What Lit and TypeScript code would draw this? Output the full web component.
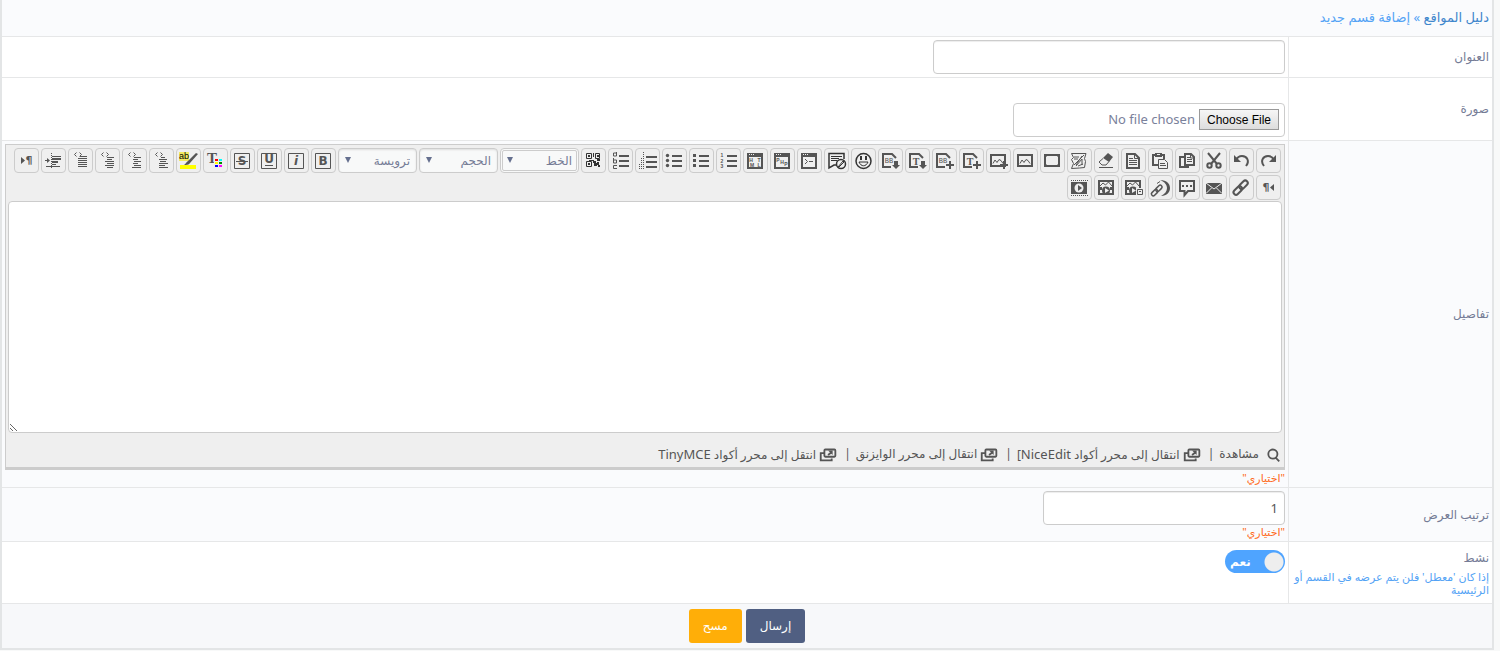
import { LitElement, html, css, svg } from "lit";
import { customElement } from "lit/decorators.js";

const frame = svg`<path class="s" d="M4.500 5.500h15v15h-15z"/>`;
const letter = (t: string) => svg`${frame}<text class="b" x="12" y="17">${t}</text>`;
const picture = svg`<path class="s2" d="M5 7h14v11H5z"/><path class="s" d="M7 15.500l2-3.500 2 2.500 2-3 2 1 2 3"/>`;
const page = svg`<path class="s2" d="M13 19H5V6h7"/><path class="s2" d="M11 6h3l4 4"/>`;
const plus = svg`<path class="s2" d="M14 17h8M18 13v8"/>`;
const down = svg`<path class="f" d="M16 13h4v4h2l-4 4-4-4h2z"/>`;
const win = svg`<path class="s2" d="M5 6h14v14H5z"/><path class="f" d="M4 5h16v4H4z"/><path class="w" d="M6 6h1v1H6zM8 6h1v1H8zM10 6h1v1h-1z"/>`;
const chain = svg`<g transform="rotate(-45 12 13)"><rect class="s2" x="3" y="10" width="10" height="5" rx="2.500"/><rect class="s2" x="11" y="10" width="10" height="5" rx="2.500"/></g>`;
const rows = svg`<path class="s2" d="M11 8h10M11 13h10M11 18h10"/>`;
const code = svg`<path class="s" d="M8.500 4.500l-2 2 2 2M11.500 4.500l2 2-2 2"/>`;
const play = (x: number, y: number, r: number) =>
  svg`<circle class="w" cx=${x} cy=${y} r=${r + 1}/><circle class="f" cx=${x} cy=${y} r=${r}/><path class="w" d="M${x - 1} ${y - 2}v4l3-2z"/>`;

const icons: Record<string, unknown> = {
  redo: svg`<path class="s2" d="M8 18C4 13 7 8 12 8c3 0 5 2 6 4"/><path class="f" d="M20 7v7h-7z"/>`,
  undo: svg`<path class="s2" d="M17 18c4-5 1-10-4-10-3 0-5 2-6 4"/><path class="f" d="M5 7v7h7z"/>`,
  cut: svg`<path class="s2" d="M6 5l9 11M18 5L9 16"/><circle class="s2" cx="7.500" cy="17.500" r="2.200"/><circle class="s2" cx="16.500" cy="17.500" r="2.200"/>`,
  copy: svg`<path class="s2" d="M14 19H5V9h4"/><path class="s2" d="M10 6h6l3 3v8h-9z"/><path class="s" d="M12 9.500h3M12 11.500h5M12 13.500h5M15.500 6v4h4"/>`,
  paste: svg`<path class="s2" d="M10 17H5V7h11v4"/><path class="f" d="M7 5h7v4H7z"/><path class="w" d="M9 6h3v1H9z"/><path class="s" d="M10.500 11.500h6l3 3v6h-9zM12 15.500h5M12 17.500h6"/>`,
  doc: svg`<path class="s2" d="M6 6h8l4 4v10H6z"/><path class="s" d="M13.500 6v4.500H18M8 10.500h4M8 12.500h8M8 14.500h8M8 16.500h8"/>`,
  eraser: svg`<path class="f" d="M14 5l5 4-4 5-6-4z"/><path class="s" d="M9 10.500l-4 3.500 3 3h4l3-3.500M5 19.500h14"/>`,
  map: svg`<path class="s" d="M4.500 5.500H19l-1.500 5 1 3-1 6-5 .5-8 .5 2-5-2-4 2-2zM7 9h5M7 11h4M7 17l6-6 4-4M9 18l6-7v6M15 8l-6 9M11 18l5-2"/>`,
  full: svg`<path class="s2" d="M5 7h14v11H5z"/><path class="f" d="M4 6h5L4 11zM20 6h-5l5 5zM4 19h5l-5-5zM20 19h-5l5-5z"/>`,
  image: picture,
  imageAdd: svg`${picture}${plus}`,
  textAdd: svg`${page}<text class="t" x="11" y="17">T</text>${plus}`,
  bbAdd: svg`${page}<text class="n" x="11" y="15">BB</text>${plus}`,
  textDown: svg`${page}<text class="t" x="11" y="17">T</text>${down}`,
  bbDown: svg`${page}<text class="n" x="11" y="15">BB</text>${down}`,
  smile: svg`<circle class="k2" cx="12.500" cy="13" r="7.500"/><path class="k" d="M8 14c2 5 7 5 9 0z"/><path class="kf" d="M9 8h2v4H9zM14 8h2v4h-2z"/>`,
  note: svg`<path class="k2" d="M20 11V5.500H5V20l5-3h3"/><path class="k" d="M7 8.500h11M7 10.500h8M7 12.500h6"/><circle class="k2" cx="17" cy="16" r="4.500"/><path class="k" d="M14 19l5-6 1 1-5 5"/>`,
  shell: svg`${win}<path class="s" d="M8 11l2.500 2.500L8 16M12 13.500h4"/>`,
  php: svg`${win}<text class="m" x="8" y="14">P</text><text class="m" x="12" y="16">H</text><text class="m" x="16" y="18">P</text>`,
  htm: svg`${win}<text class="m" x="8" y="14">H</text><text class="m" x="16" y="14">T</text><text class="m" x="9" y="19">M</text><text class="m" x="16" y="19">L</text>`,
  ol: svg`${rows}<text class="m" x="6" y="9">1</text><text class="m" x="6" y="15">2</text><text class="m" x="6" y="20">3</text>`,
  square: svg`<path class="s2" d="M10 8h10M10 13h10M10 18h10"/><path class="f" d="M4 6h3v3H4zM4 11h3v3H4zM4 16h3v3H4z"/>`,
  bullet: svg`<path class="s2" d="M10 8h10M10 13h10M10 18h10"/><circle class="f" cx="5.500" cy="7.500" r="1.700"/><circle class="f" cx="5.500" cy="12.500" r="1.700"/><circle class="f" cx="5.500" cy="17.500" r="1.700"/>`,
  roman: svg`<path class="s2" d="M11 9h11M11 14h11M11 19h11"/><path class="d" d="M8.500 4v5M8.500 10v5M6.500 10v5M8.500 16v5M6.500 16v5M4.500 16v5"/>`,
  alpha: svg`${rows}<path class="s" d="M8.500 4v4h-3v-3h3M5.500 10v5h3v-3h-3M9 17.500H5.500v3H9"/>`,
  qr: svg`<path class="k" d="M5.500 5.500h5v5h-5zM14.500 5.500h4v5h-4zM5.500 13.500h5v5h-5z"/><path class="kf" d="M7 7h2v2H7zM16 7h2v2h-2zM7 15h2v2H7zM12 5h1v4h-1zM8 12h5v1H8zM12 13h3v2h-3zM16 11h3v2h-3zM13 15h3v3h-3zM16 14h2v3h-2zM17 17h2v2h-2z"/>`,
  bold: letter("B"),
  italic: svg`${frame}<text class="b i" x="12" y="17">i</text>`,
  under: svg`${frame}<text class="b" x="12" y="15">U</text><path class="s" d="M8 17.500h8"/>`,
  strike: svg`${letter("S")}<path class="s" d="M6 13.500h12"/>`,
  color: svg`<text class="T" x="9" y="15">T</text><path class="w" d="M11 10h10v10H11z"/><path fill="#f00" d="M12 11h3v2h-3z"/><path fill="#0ff" d="M16 11h3v2h-3z"/><path fill="#ff0" d="M12 14h3v2h-3z"/><path fill="#080" d="M16 14h3v2h-3z"/><path fill="#00f" d="M12 17h3v2h-3z"/><path fill="#f0f" d="M16 17h3v2h-3z"/>`,
  mark: svg`<path fill="#f1ea62" d="M3 4h10v9H3z"/><path fill="#ff0" d="M4 17h16v4H4z"/><text class="ab" x="8" y="11">ab</text><path class="f" d="M20 5l2 1-8 9-2-2zM12 13l2 2c-1 2-4 2-6 2 2-1 2-3 4-4z"/>`,
  l1: svg`${code}<path class="s" d="M12 8.500h7M10 10.500h9M10 12.500h9M10 14.500h9M10 16.500h9M10 18.500h9"/>`,
  l2: svg`${code}<path class="s" d="M12 9.500h7M12 11.500h5M10 13.500h9M12 15.500h7M10 17.500h9M12 19.500h6"/>`,
  l3: svg`${code}<path class="s" d="M12 9.500h7M11 11.500h5M12 13.500h7M11 15.500h5M12 17.500h7M10 19.500h9"/>`,
  l4: svg`${code}<path class="s" d="M12 9.500h4M10 11.500h8M11 13.500h6M10 15.500h9M10 17.500h6M10 19.500h9"/>`,
  indent: svg`<path class="s" d="M11 8.500h9M11 16.500h4M5 18.500h14M4 12.500h4"/><path class="s2" d="M11 11h9M11 14h6"/><path class="f" d="M6 10l3 2.500L6 15z"/><path class="d" d="M10.500 5v16"/>`,
  ltr: svg`<path class="f" d="M7 9v7l4-3.500z"/><text class="p" x="15" y="16">¶</text>`,
  rtl: svg`<path class="f" d="M18 9v7l-4-3.500z"/><text class="p" x="10" y="16">¶</text>`,
  link: chain,
  mail: svg`<path class="f" d="M4 8h16v11H4z"/><path class="l" d="M4 8l8 6 8-6M4 18.500l5.500-5.500M20 18.500L14.500 13"/>`,
  chat: svg`<path class="s2" d="M5 6h14v10h-6l-3.500 4v-4H5z"/><path class="f" d="M7 10h2v2H7zM11 10h2v2h-2zM15 10h2v2h-2z"/>`,
  moon: svg`<g transform="translate(0 6) scale(.75)">${chain}</g><path class="f" d="M12 5c7 0 10 4 10 8s-3 8-9 8c4-2 6-5 6-8s-2-6-7-8z"/><path class="s" d="M9 8.500l3-2"/>`,
  mediaImage: svg`<path class="s2" d="M5 6h14v13H5z"/><path class="s" d="M6 11l3-3 2.500 2 3-3 3.500 4"/><path class="f" d="M5 12h3v3H5zM16 12h3v3h-3z"/><circle class="f" cx="12" cy="15.500" r="4"/><path class="w" d="M11 13v5l4-2.500z"/>`,
  mediaAdd: svg`<path class="s2" d="M15 19H5V6h14v7"/><path class="s" d="M6 11l3-3 2.500 2 3-3 3.500 4"/><path class="f" d="M5 12h3v3H5z"/><circle class="f" cx="12" cy="15.500" r="4"/><path class="w" d="M11 13v5l4-2.500z"/><path class="w" d="M15 13h7v8h-7z"/><path class="s" d="M16.500 14.500h5v5h-5zM18 16.500h2"/>`,
  video: svg`<path class="d" d="M4 5.500h17M4 20.500h17"/><path class="f" d="M4 7h16v12H4z"/><circle class="w" cx="12" cy="13" r="4.500"/><path class="f" d="M11 10v6l4-3z"/>`,
  search: svg`<circle class="s2" cx="14" cy="12" r="5"/><path class="s2" d="M17 16l4 4"/>`,
  open: svg`<path class="s2" d="M8 11H4v8h12v-2"/><rect class="s2" x="8" y="7" width="12" height="8" rx="1"/><path class="s2" d="M12 13l4-3"/><path class="f" d="M12 8h5v5z"/>`,
};

const draw = (name: string) =>
  html`<svg class="ic" viewBox="1 1 23 23" aria-hidden="true">${icons[name]}</svg>`;

const before = "redo undo cut copy paste doc eraser map full image imageAdd textAdd bbAdd textDown bbDown smile note shell php htm ol square bullet roman alpha qr".split(" ");
const after = "bold italic under strike color mark l4 l3 l2 l1 indent ltr rtl link mail chat moon mediaAdd mediaImage video".split(" ");

@customElement("app-root")
export class AppRoot extends LitElement {
  static styles = css`
    :host {
      display: block;
      box-sizing: border-box;
      min-height: 100vh;
      direction: rtl;
      padding-right: 6px;
      background: #f8f9f9;
      font: 12px/18px "Noto Sans", "DejaVu Sans", sans-serif;
      color: #757c96;
    }
    * { box-sizing: border-box; }
    form { border: solid #e3e5e6; border-width: 0 2px 2px; background: #fff; }
    .head { height: 37px; padding: 8px 3px; background: #fafbfd; border-bottom: 1px solid #e6e7e8; color: #54a3f5; font-size: 13px; }
    a { color: inherit; text-decoration: none; }
    .head a { color: #3f86cc; }
    .head .here { color: #54a3f5; }
    .row { display: grid; grid-template-columns: 204px minmax(0, 1fr); border-bottom: 1px solid #e6e7e8; }
    .alt { background: #fafbfd; }
    .name { display: flex; flex-direction: column; justify-content: center; padding: 3px; border-left: 1px solid #e6e7e8; }
    .cell { padding: 3px; }
    .file { padding-top: 25px; }
    .tall { min-height: 62px; }
    .name small { margin-top: 3px; font-size: 11px; line-height: 13px; color: #54a3f5; }
    .box { display: block; height: 34px; border: 1px solid #ccc; border-radius: 4px; background: #fff; box-shadow: inset 0 1px 1px rgba(0, 0, 0, .075); font: inherit; font-size: 13px; color: #555; padding: 6px; }
    .title { width: 352px; }
    .order { width: 242px; }
    .upload { width: 272px; padding: 5px; color: #7a819b; box-shadow: none; }
    .upload::file-selector-button { height: 21px; margin: 0 0 0 4px; padding: 0 7px; border: 1px solid #999; border-radius: 0; background: linear-gradient(#f6f6f6, #ddd); font: 12px "Liberation Sans", sans-serif; color: #000; }
    .opt { font-size: 11px; line-height: 12px; color: #ff6a1a; margin-top: 1px; }
    .editor { border: 1px solid #ccc; border-bottom-width: 3px; background: #efefef; padding: 3px 2px 0; margin-bottom: 2px; }
    .bar { display: flex; flex-wrap: wrap; gap: 2px; padding-right: 1px; }
    .tool { width: 25px; height: 25px; padding: 0; border: 1px solid #ccc; border-radius: 4px; background: #efefef; }
    .ic { display: block; width: 23px; height: 23px; }
    .pick { position: relative; width: 79px; height: 25px; }
    .pick select { appearance: none; width: 79px; height: 25px; padding: 0 6px; border: 1px solid #ccc; border-radius: 4px; background: #f8f9f9; font: inherit; color: #757c96; box-shadow: inset 0 1px 2px #ddd; }
    .pick::after { content: ""; position: absolute; left: 7px; top: 9px; border: solid transparent; border-width: 6px 3px 0; border-top-color: #65708f; pointer-events: none; }
    .pick.on select { border: 3px double #ccc; padding: 0 4px; box-shadow: none; }
    textarea { display: block; width: 100%; height: 232px; margin-top: 1px; border: 1px solid #ccc; border-radius: 4px; background: #fff; font: inherit; resize: both; }
    .links { display: flex; align-items: center; gap: 5px; height: 34px; padding-top: 8px; color: #555; }
    .links a { display: flex; align-items: center; gap: 2px; }
    .links .ic { width: 21px; height: 21px; }
    .links bdi { font-size: 13px; }
    .switch { position: relative; display: block; width: 60px; height: 23px; margin-top: 5px; color: #fff; font-weight: bold; }
    .switch input { appearance: none; display: block; width: 60px; height: 23px; margin: 0; border-radius: 12px; background: radial-gradient(circle at 49px 12px, #eee 9px, #4fa4ff 10px); }
    .switch span { position: absolute; left: 5px; top: 3px; }
    .foot { display: flex; justify-content: center; gap: 4px; padding: 5px 0; background: #f7f8fa; }
    .go { height: 34px; border: 0; border-radius: 3px; padding: 0 14px; font: inherit; color: #fff; background: #505f82; }
    .clear { background: #ffae08; }
    .s, .s2, .d, .k, .k2, .l { fill: none; stroke: #555; }
    .s2 { stroke-width: 2; }
    .d { stroke-dasharray: 1 1; }
    .k, .k2 { stroke: #333; }
    .k2 { stroke-width: 1.500; }
    .kf { fill: #333; }
    .l { stroke: #efefef; }
    .f { fill: #555; }
    .w { fill: #efefef; }
    text { fill: #555; text-anchor: middle; direction: ltr; }
    .b { font: bold 12px "DejaVu Sans", sans-serif; }
    .i { font-style: italic; }
    .t { font: bold 10px "Liberation Serif", serif; }
    .T { font: bold 15px "Liberation Serif", serif; }
    .n { font: 7px "Liberation Mono", monospace; }
    .m { font: bold 5px "Liberation Sans", sans-serif; }
    .ab { font: 9px "Liberation Sans", sans-serif; fill: #000; }
    .p { font: bold 11px "DejaVu Sans", sans-serif; }
  `;

  private tool(name: string) {
    return html`<button type="button" class="tool" aria-label=${name}>${draw(name)}</button>`;
  }

  private pick(text: string, cls = "") {
    return html`<span class="pick ${cls}"><select aria-label=${text}><option>${text}</option></select></span>`;
  }

  render() {
    return html`<form @submit=${(e: Event) => e.preventDefault()}>
      <div class="head"><a href="#">دليل المواقع</a> » <a class="here" href="#">إضافة قسم جديد</a></div>
      <div class="row">
        <label class="name" for="title">العنوان</label>
        <div class="cell"><input class="box title" id="title" type="text" /></div>
      </div>
      <div class="row">
        <label class="name" for="file">صورة</label>
        <div class="cell file"><input class="box upload" id="file" type="file" /></div>
      </div>
      <div class="row alt">
        <label class="name" for="details">تفاصيل</label>
        <div class="cell">
          <div class="editor">
            <div class="bar">
              ${before.map((n) => this.tool(n))}
              ${this.pick("الخط", "on")}${this.pick("الحجم")}${this.pick("ترويسة")}
              ${after.map((n) => this.tool(n))}
            </div>
            <textarea id="details"></textarea>
            <div class="links">
              <a href="#">${draw("search")}مشاهدة</a> <span>|</span>
              <a href="#">${draw("open")}<span>انتقال إلى محرر أكواد <bdi>NiceEdit</bdi>]</span></a> <span>|</span>
              <a href="#">${draw("open")}انتقال إلى محرر الوايزنق</a> <span>|</span>
              <a href="#">${draw("open")}<span>انتقل إلى محرر أكواد <bdi>TinyMCE</bdi></span></a>
            </div>
          </div>
          <div class="opt">"اختياري"</div>
        </div>
      </div>
      <div class="row alt">
        <label class="name" for="order">ترتيب العرض</label>
        <div class="cell"><input class="box order" id="order" type="text" value="1" /><div class="opt">"اختياري"</div></div>
      </div>
      <div class="row tall">
        <label class="name" for="active">نشط<small>إذا كان 'معطل' فلن يتم عرضه في القسم أو الرئيسية</small></label>
        <div class="cell"><label class="switch"><input id="active" type="checkbox" checked /><span>نعم</span></label></div>
      </div>
      <div class="foot"><button class="go" type="submit">إرسال</button><button class="go clear" type="reset">مسح</button></div>
    </form>`;
  }
}
